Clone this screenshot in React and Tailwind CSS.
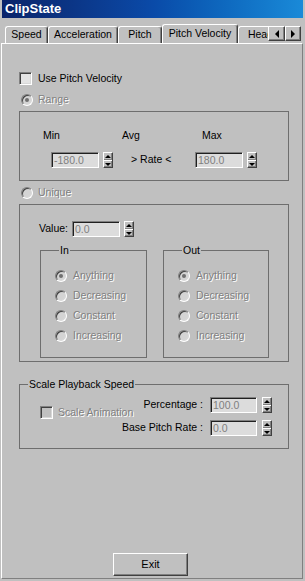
import React from "react";

const raised =
  "border border-t-white border-l-white border-r-[#404040] border-b-[#404040] shadow-[inset_-1px_-1px_0_#808080]";

function Tab({ label, w, selected }) {
  return (
    <div
      className={`${w} shrink-0 flex items-center justify-center rounded-t-[3px] border-t border-l border-r border-t-white border-l-white border-r-[#404040] shadow-[inset_-1px_0_0_#808080] bg-[#c0c0c0] whitespace-nowrap ${
        selected ? "h-[20px] relative z-10 -mb-px pb-[2px]" : "h-[17px]"
      }`}
    >
      {label}
    </div>
  );
}

function Spin() {
  return (
    <div className={`w-[10px] h-[16px] ml-[4px] flex flex-col bg-[#c0c0c0] ${raised}`}>
      <div className="flex-1 flex items-center justify-center border-b border-b-[#808080]">
        <div className="w-0 h-0 border-x-[3px] border-x-transparent border-b-[3px] border-b-black" />
      </div>
      <div className="flex-1 flex items-center justify-center border-t border-t-white">
        <div className="w-0 h-0 border-x-[3px] border-x-transparent border-t-[3px] border-t-black" />
      </div>
    </div>
  );
}

function Field({ value, w = "w-[48px]" }) {
  return (
    <div
      className={`${w} h-[16px] bg-[#dcdcdc] border border-t-[#808080] border-l-[#808080] border-b-white border-r-white shadow-[inset_1px_1px_0_#202020] text-[#808080] pl-[2px] leading-[14px] flex items-center`}
    >
      {value}
    </div>
  );
}

function Radio({ checked }) {
  return (
    <div className="w-[12px] h-[12px] shrink-0 rounded-full border border-t-[#808080] border-l-[#808080] border-b-white border-r-white shadow-[inset_1px_1px_0_#404040,inset_-1px_-1px_0_#d8d8d8] bg-[#d4d4d4] flex items-center justify-center">
      {checked && <div className="w-[4px] h-[4px] rounded-full bg-[#707070]" />}
    </div>
  );
}

function Check({ disabled }) {
  return (
    <div
      className={`w-[13px] h-[13px] shrink-0 border border-t-[#808080] border-l-[#808080] border-b-white border-r-white shadow-[inset_1px_1px_0_#404040,inset_-1px_-1px_0_#d8d8d8] ${
        disabled ? "bg-[#c0c0c0]" : "bg-[#e4e4e4]"
      }`}
    />
  );
}

const dis = "text-[#808080] [text-shadow:1px_1px_0_#ffffff]";

function RadioRow({ label, checked }) {
  return (
    <div className="h-[14px] flex items-center">
      <Radio checked={checked} />
      <span className={`ml-[6px] ${dis}`}>{label}</span>
    </div>
  );
}

function SubGroup({ title, w }) {
  return (
    <fieldset className={`${w} h-[114px] border border-[#6e6e6e] pl-[14px]`}>
      <legend className="ml-[4px] px-[1px] leading-[13px] text-black">{title}</legend>
      <div className="mt-[12px] flex flex-col gap-[6px]">
        <RadioRow label="Anything" checked />
        <RadioRow label="Decreasing" />
        <RadioRow label="Constant" />
        <RadioRow label="Increasing" />
      </div>
    </fieldset>
  );
}

export default function App() {
  return (
    <div className="w-[305px] h-[581px] bg-[#c0c0c0] flex flex-col font-['Liberation_Sans',Arial,sans-serif] text-[10.5px] text-black overflow-hidden">
      <div className="mx-[2px] h-[18px] shrink-0 bg-gradient-to-r from-[#0a246a] via-[#0a4aa8] to-[#1a8ad8] flex items-center pl-[3px] text-white font-bold text-[13px]">
        ClipState
      </div>
      <div className="h-[25px] shrink-0 flex items-end pl-[5px]">
        <div className="w-[263px] flex items-end overflow-hidden">
          <Tab label="Speed" w="w-[43px]" />
          <Tab label="Acceleration" w="w-[70px]" />
          <Tab label="Pitch" w="w-[44px]" />
          <Tab label="Pitch Velocity" w="w-[76px]" selected />
          <Tab label="Head" w="w-[45px]" />
        </div>
        <div className="flex mb-[2px]">
          <div className={`w-[17px] h-[15px] bg-[#c0c0c0] flex items-center justify-center ${raised}`}>
            <div className="w-0 h-0 border-y-[4px] border-y-transparent border-r-[4px] border-r-black" />
          </div>
          <div className={`w-[16px] h-[15px] bg-[#c0c0c0] flex items-center justify-center ${raised}`}>
            <div className="w-0 h-0 border-y-[4px] border-y-transparent border-l-[4px] border-l-black" />
          </div>
        </div>
      </div>
      <div className="flex-1 ml-[1px] mr-[2px] mb-[2px] border border-t-white border-l-white border-r-[#808080] border-b-[#808080] flex flex-col pl-[17px]">
        <div className="mt-[28px] h-[13px] flex items-center">
          <Check />
          <span className="ml-[6px]">Use Pitch Velocity</span>
        </div>
        <div className="mt-[9px] h-[12px] flex items-center pl-[2px]">
          <Radio checked />
          <span className={`ml-[5px] ${dis}`}>Range</span>
        </div>
        <div className="mt-[5px] w-[270px] h-[70px] border border-[#6e6e6e] flex flex-col">
          <div className="mt-[17px] h-[14px] flex items-center pl-[23px]">
            <div className="w-[79px]">Min</div>
            <div className="w-[80px]">Avg</div>
            <div>Max</div>
          </div>
          <div className="mt-[9px] flex items-center pl-[31px]">
            <Field value="-180.0" />
            <Spin />
            <div className="w-[82px] pl-[18px]">&gt; Rate &lt;</div>
            <Field value="180.0" />
            <Spin />
          </div>
        </div>
        <div className="mt-[6px] h-[12px] flex items-center pl-[2px]">
          <Radio />
          <span className={`ml-[5px] ${dis}`}>Unique</span>
        </div>
        <div className="mt-[5px] w-[270px] h-[158px] border border-[#6e6e6e] flex flex-col">
          <div className="mt-[16px] flex items-center pl-[19px]">
            <span className="w-[33px]">Value:</span>
            <Field value="0.0" />
            <Spin />
          </div>
          <div className="mt-[7px] flex pl-[20px] gap-[16px]">
            <SubGroup title="In" w="w-[107px]" />
            <SubGroup title="Out" w="w-[106px]" />
          </div>
        </div>
        <fieldset className="mt-[16px] w-[270px] border border-[#6e6e6e]">
          <legend className="ml-[8px] px-[1px] leading-[13px] text-[10.5px]">Scale Playback Speed</legend>
          <div className="mt-[6px] h-[16px] flex items-start">
            <div className="w-[100px] pl-[20px] pt-[9px] h-[16px] flex items-start overflow-visible whitespace-nowrap">
              <Check disabled />
              <span className={`ml-[5px] -mt-[1px] ${dis}`}>Scale Animation</span>
            </div>
            <div className="w-[84px] h-[16px] flex items-center justify-end pr-[1px] whitespace-nowrap">Percentage :</div>
            <div className="ml-[6px] flex items-center">
              <Field value="100.0" w="w-[47px]" />
              <div className="ml-[1px]"><Spin /></div>
            </div>
          </div>
          <div className="mt-[7px] mb-[12px] h-[16px] flex items-center">
            <div className="w-[100px]" />
            <div className="w-[84px] flex items-center justify-end pr-[1px] whitespace-nowrap">Base Pitch Rate :</div>
            <div className="ml-[6px] flex items-center">
              <Field value="0.0" w="w-[47px]" />
              <div className="ml-[1px]"><Spin /></div>
            </div>
          </div>
        </fieldset>
        <div className="mt-auto mb-[2px] pl-[94px]">
          <div className={`w-[75px] h-[23px] bg-[#c0c0c0] flex items-center justify-center text-[11px] ${raised}`}>
            Exit
          </div>
        </div>
      </div>
    </div>
  );
}
